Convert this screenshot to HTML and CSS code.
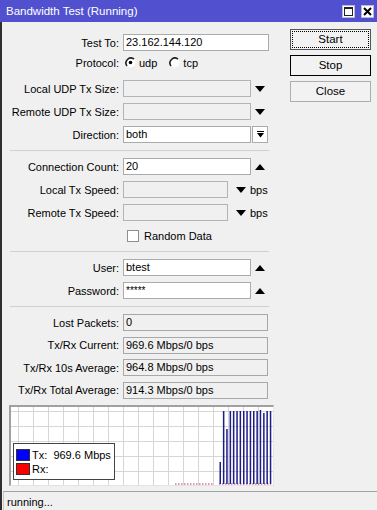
FILE: index.html
```html
<!DOCTYPE html>
<html lang="en">
<head>
    <meta charset="UTF-8">
    <title>Bandwidth Test (Running)</title>
    <link rel="stylesheet" href="styles.css">
</head>
<body>
    <div class="titlebar">
        <span class="title">Bandwidth Test (Running)</span>
        <div class="title-btns">
            <span class="tbtn"><span class="restore"></span></span>
            <span class="tbtn close">
                <svg width="9" height="9" viewBox="0 0 9 9"><path d="M1 1L8 8M8 1L1 8" stroke="#000" stroke-width="2"/></svg>
            </span>
        </div>
    </div>

    <div class="frame">
        <div class="content">
            <div class="form">
                <div class="row first">
                    <span class="label">Test To:</span>
                    <span class="field wide">23.162.144.120</span>
                </div>
                <div class="row proto">
                    <span class="label">Protocol:</span>
                    <span class="radio">
                        <svg width="11" height="11" viewBox="0 0 11 11"><circle cx="5.5" cy="5.5" r="5" fill="#fff"/><path d="M2 9A5 5 0 0 1 9 2" stroke="#222" stroke-width="1.6" fill="none"/><circle cx="5.5" cy="5.5" r="1.8" fill="#000"/></svg>
                        udp
                    </span>
                    <span class="radio">
                        <svg width="11" height="11" viewBox="0 0 11 11"><circle cx="5.5" cy="5.5" r="5" fill="#fff"/><path d="M2 9A5 5 0 0 1 9 2" stroke="#222" stroke-width="1.6" fill="none"/></svg>
                        tcp
                    </span>
                </div>
                <div class="row gap">
                    <span class="label">Local UDP Tx Size:</span>
                    <span class="field off"></span>
                    <span class="arrow"><svg width="10" height="6"><polygon points="0,0 10,0 5,6" fill="#000"/></svg></span>
                </div>
                <div class="row">
                    <span class="label">Remote UDP Tx Size:</span>
                    <span class="field off"></span>
                    <span class="arrow"><svg width="10" height="6"><polygon points="0,0 10,0 5,6" fill="#000"/></svg></span>
                </div>
                <div class="row">
                    <span class="label">Direction:</span>
                    <span class="field">both</span>
                    <span class="drop">
                        <svg width="7" height="7"><rect x="0" y="0" width="7" height="1" fill="#000"/><polygon points="0,2 7,2 3.5,6.5" fill="#000"/></svg>
                    </span>
                </div>

                <div class="sep"></div>

                <div class="row top">
                    <span class="label">Connection Count:</span>
                    <span class="field">20</span>
                    <span class="arrow"><svg width="10" height="6"><polygon points="0,6 10,6 5,0" fill="#000"/></svg></span>
                </div>
                <div class="row">
                    <span class="label">Local Tx Speed:</span>
                    <span class="field off short"></span>
                    <span class="arrow small"><svg width="10" height="6"><polygon points="0,0 10,0 5,6" fill="#000"/></svg></span>
                    <span class="unit">bps</span>
                </div>
                <div class="row">
                    <span class="label">Remote Tx Speed:</span>
                    <span class="field off short"></span>
                    <span class="arrow small"><svg width="10" height="6"><polygon points="0,0 10,0 5,6" fill="#000"/></svg></span>
                    <span class="unit">bps</span>
                </div>
                <div class="row">
                    <span class="label"></span>
                    <span class="check"></span>
                    <span>Random Data</span>
                </div>

                <div class="sep"></div>

                <div class="row top">
                    <span class="label">User:</span>
                    <span class="field">btest</span>
                    <span class="arrow"><svg width="10" height="6"><polygon points="0,6 10,6 5,0" fill="#000"/></svg></span>
                </div>
                <div class="row">
                    <span class="label">Password:</span>
                    <span class="field pass">*****</span>
                    <span class="arrow"><svg width="10" height="6"><polygon points="0,6 10,6 5,0" fill="#000"/></svg></span>
                </div>

                <div class="sep"></div>

                <div class="row top stat">
                    <span class="label">Lost Packets:</span>
                    <span class="field ro">0</span>
                </div>
                <div class="row stat">
                    <span class="label">Tx/Rx Current:</span>
                    <span class="field ro">969.6 Mbps/0 bps</span>
                </div>
                <div class="row stat">
                    <span class="label">Tx/Rx 10s Average:</span>
                    <span class="field ro">964.8 Mbps/0 bps</span>
                </div>
                <div class="row stat">
                    <span class="label">Tx/Rx Total Average:</span>
                    <span class="field ro">914.3 Mbps/0 bps</span>
                </div>
            </div>

            <div class="actions">
                <button class="btn focus"><span>Start</span></button>
                <button class="btn default"><span>Stop</span></button>
                <button class="btn"><span>Close</span></button>
            </div>
        </div>

        <div class="graph">
            <svg class="plot" width="262" height="78" viewBox="0 0 262 78">
                <line x1="164" y1="77" x2="202" y2="77" stroke="#c0306a" stroke-width="1" stroke-dasharray="1.5 1.5"/>
                <line x1="208" y1="77" x2="260" y2="77" stroke="#c0306a" stroke-width="1" stroke-dasharray="1.5 1.5"/>
                <g fill="#1c1c8a">
                    <rect x="208.5" y="55" width="1.5" height="22"/>
                    <rect x="211.9" y="4" width="1.5" height="73"/>
                    <rect x="215.2" y="22" width="1.5" height="55"/>
                    <rect x="218.6" y="4" width="1.5" height="73"/>
                    <rect x="221.9" y="4" width="1.5" height="73"/>
                    <rect x="225.3" y="4" width="1.5" height="73"/>
                    <rect x="228.6" y="4" width="1.5" height="73"/>
                    <rect x="232" y="4" width="1.5" height="73"/>
                    <rect x="235.3" y="4" width="1.5" height="73"/>
                    <rect x="238.7" y="4" width="1.5" height="73"/>
                    <rect x="242" y="4" width="1.5" height="73"/>
                    <rect x="245.4" y="4" width="1.5" height="73"/>
                    <rect x="248.7" y="3" width="1.5" height="74"/>
                    <rect x="252.1" y="6" width="1.5" height="71"/>
                    <rect x="255.4" y="4" width="1.5" height="73"/>
                    <rect x="258.8" y="4" width="1.5" height="73"/>
                </g>
            </svg>
            <div class="legend">
                <div class="key"><span class="swatch tx"></span>Tx:&nbsp; 969.6 Mbps</div>
                <div class="key"><span class="swatch rx"></span>Rx:</div>
            </div>
        </div>

        <div class="status">running...</div>
    </div>
</body>
</html>
```

FILE: styles.css
```css
body {
    margin: 0;
    font-family: "Liberation Sans", Arial, sans-serif;
    font-size: 11px;
    color: #000;
    background-color: #f0f0f0;
}
.titlebar {
    height: 22px;
    background-color: #5151cf;
    color: #fff;
    display: flex;
    align-items: center;
    justify-content: space-between;
    padding: 0 3px 0 6px;
}
.title {
    font-size: 11.5px;
}
.title-btns {
    display: flex;
    gap: 6px;
}
.tbtn {
    width: 11px;
    height: 11px;
    background-color: #fff;
    border: 1px solid #b8b8d8;
    display: flex;
    align-items: center;
    justify-content: center;
}
.restore {
    width: 7px;
    height: 6px;
    border: 1px solid #222;
    border-top-width: 2px;
}
.frame {
    border-left: 2px solid #2e2e2e;
    height: 488px;
}
.content {
    display: flex;
}
.form {
    width: 270px;
    padding-top: 12px;
}
.row {
    display: flex;
    align-items: center;
    height: 17px;
    margin-top: 6px;
}
.row.first {
    margin-top: 0;
}
.row.proto {
    margin-top: 3px;
}
.row.gap {
    margin-top: 9px;
}
.row.top {
    margin-top: 0;
}
.row.stat {
    margin-top: 5.5px;
}
.row.stat.top {
    margin-top: 0;
}
.label {
    width: 117px;
    margin-right: 4px;
    text-align: right;
    white-space: nowrap;
}
.field {
    box-sizing: border-box;
    width: 128px;
    height: 17px;
    line-height: 15px;
    padding: 0 2px;
    border: 1px solid #ababab;
    background-color: #fff;
    white-space: nowrap;
}
.field.wide {
    width: 146px;
}
.field.short {
    width: 105px;
}
.field.off {
    background-color: #f0f0f0;
    border-color: #b4b4b4;
}
.field.ro {
    width: 145px;
    background-color: #f0f0f0;
    border-color: #a8a8a8;
}
.field.pass {
    font-size: 10px;
}
.arrow {
    width: 18px;
    display: flex;
    justify-content: center;
}
.arrow.small {
    width: 10px;
    margin-left: 8px;
}
.unit {
    margin-left: 4px;
}
.drop {
    box-sizing: border-box;
    width: 16px;
    height: 17px;
    margin-left: 1px;
    border: 1px solid #ababab;
    background-color: #fff;
    display: flex;
    align-items: center;
    justify-content: center;
}
.radio {
    display: flex;
    align-items: center;
    gap: 3px;
    margin-left: 2px;
    margin-right: 10px;
}
.check {
    width: 10px;
    height: 10px;
    margin-left: 4px;
    margin-right: 5px;
    border: 1px solid #8f8f8f;
    background-color: #fff;
}
.sep {
    height: 1px;
    margin: 7px 0 7px 8px;
    width: 259px;
    background-color: #d0d0d0;
}
.actions {
    margin-left: 18px;
    padding-top: 7px;
    display: flex;
    flex-direction: column;
    gap: 5px;
}
.btn {
    box-sizing: border-box;
    width: 81px;
    height: 21px;
    padding: 1px;
    border: 1px solid #adadad;
    background-color: #f2f2f2;
    font-family: "Liberation Sans", Arial, sans-serif;
    font-size: 11.5px;
    color: #000;
}
.btn span {
    display: block;
    height: 17px;
    line-height: 17px;
    text-align: center;
}
.btn.focus {
    border-color: #555;
}
.btn.focus span {
    box-sizing: border-box;
    border: 1px dotted #000;
    line-height: 15px;
}
.btn.default {
    border-color: #000;
}
.graph {
    position: relative;
    box-sizing: border-box;
    width: 265px;
    height: 81px;
    margin: 6px 0 0 7px;
    border-top: 2px solid #a0a0a0;
    border-left: 2px solid #a0a0a0;
    border-right: 1px solid #e4e4e4;
    border-bottom: 1px solid #e4e4e4;
    background-color: #fff;
    background-image:
        linear-gradient(to right, #d6d6d6 1px, transparent 1px),
        linear-gradient(to bottom, #d6d6d6 1px, transparent 1px);
    background-size: 15px 15px;
    background-position: 7px 4px;
}
.plot {
    display: block;
}
.legend {
    position: absolute;
    left: 2px;
    top: 36px;
    box-sizing: border-box;
    width: 102px;
    height: 37px;
    padding: 4px 0 0 2px;
    border: 1px solid #444;
    background-color: #fff;
}
.key {
    display: flex;
    align-items: center;
    height: 14px;
    font-size: 11px;
    white-space: nowrap;
}
.swatch {
    box-sizing: border-box;
    flex: none;
    width: 14px;
    height: 12px;
    margin-right: 2px;
    border: 1px solid #333;
}
.swatch.tx {
    background-color: #0000ff;
}
.swatch.rx {
    background-color: #ff0000;
}
.status {
    box-sizing: border-box;
    height: 22px;
    margin: 5px 0 0 1px;
    padding-left: 3px;
    line-height: 20px;
    border-top: 1px solid #a0a0a0;
    border-bottom: 1px solid #a0a0a0;
    border-left: 1px solid #c8c8c8;
}
```
